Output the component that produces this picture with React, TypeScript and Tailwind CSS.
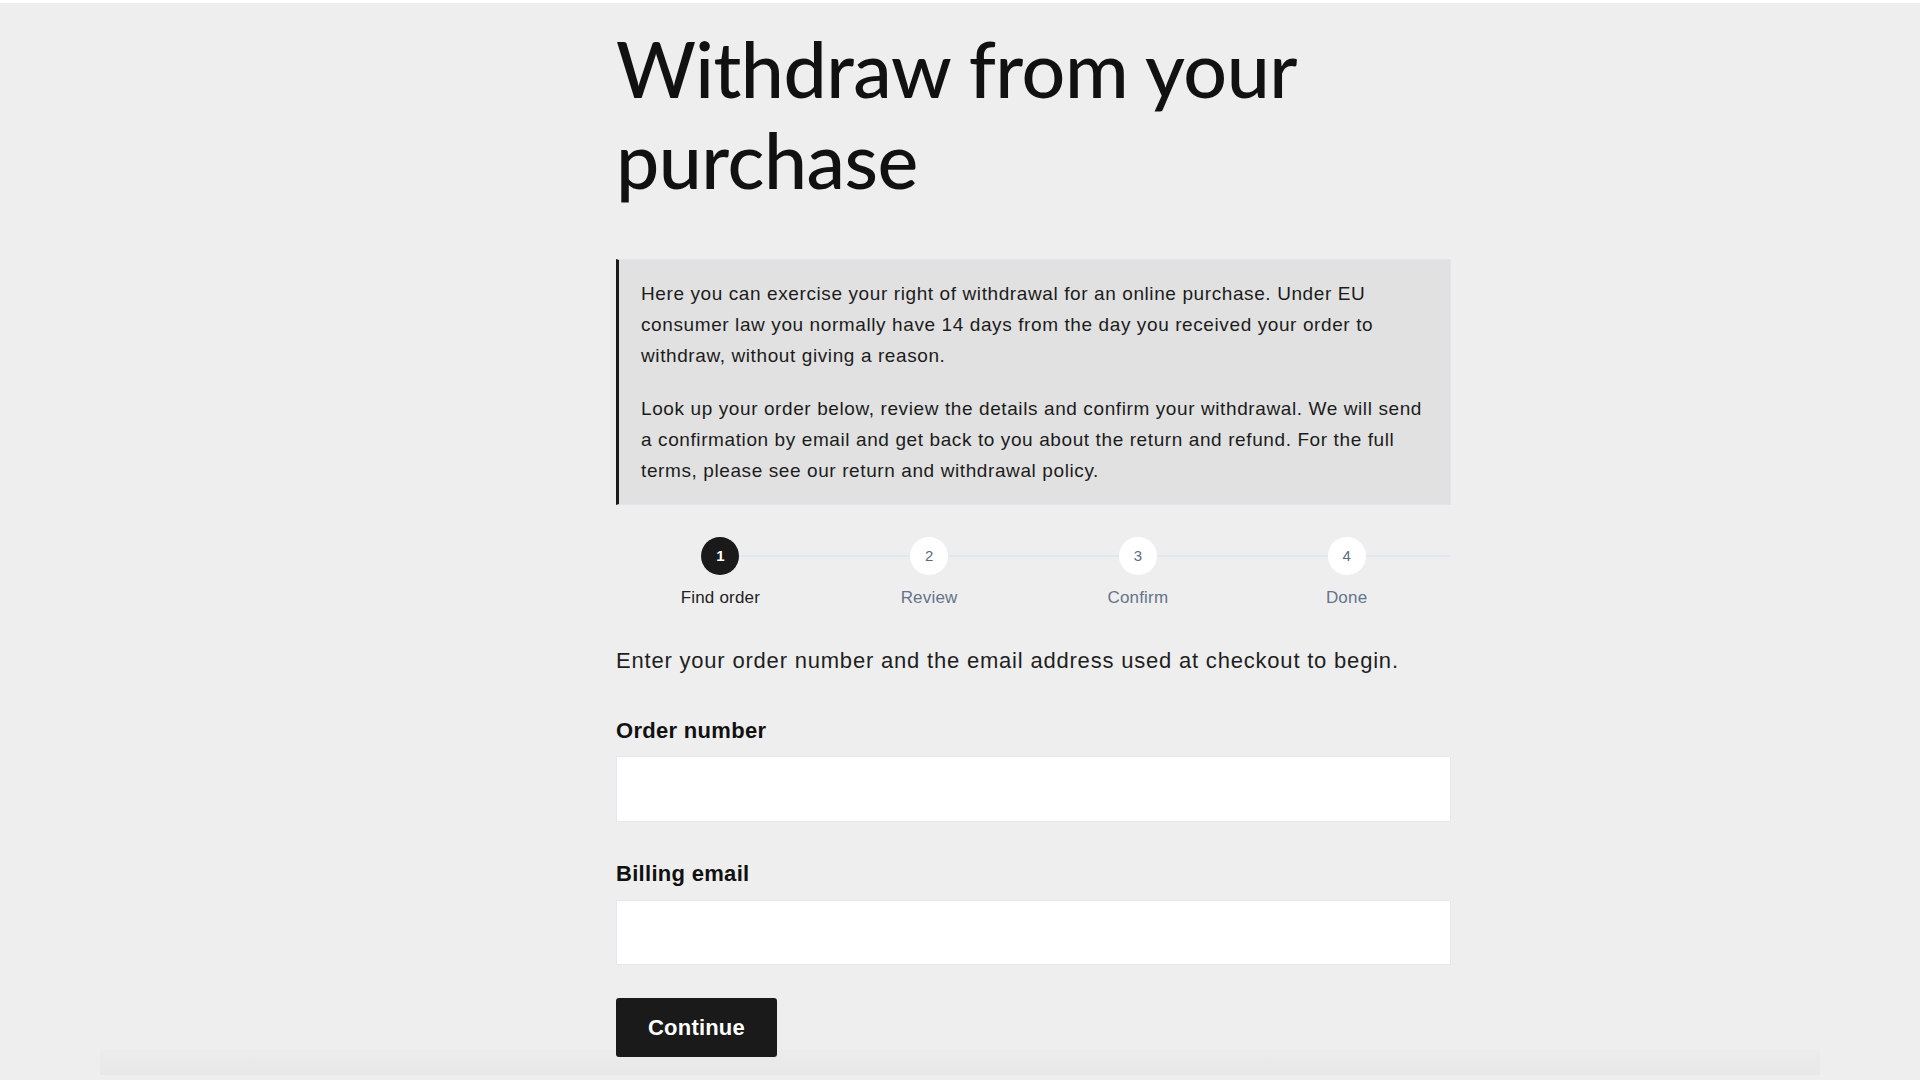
import { useState } from "react";

const steps = ["Find order", "Review", "Confirm", "Done"];

const Stepper = ({ current }: { current: number }) => {
  return (
    <div className="relative grid grid-cols-4 mt-[32px]">
      {/* track runs from the first step to the right edge */}
      <div className="absolute left-[12.5%] right-0 top-[18px] h-[2px] bg-[#e1e7ef]" />
      {steps.map((label, index) => {
        const active = index + 1 === current;
        return (
          <div key={label} className="relative flex flex-col items-center">
            <div
              className={`w-[38px] h-[38px] rounded-full flex items-center justify-center text-[15px] ${
                active
                  ? "bg-[#1a1a1a] text-white font-bold"
                  : "bg-white text-[#5b6b84]"
              }`}
            >
              {index + 1}
            </div>
            <span
              className={`mt-[13px] text-[17px] leading-[20px] tracking-[0.2px] ${
                active ? "text-[#222]" : "text-[#64748b]"
              }`}
            >
              {label}
            </span>
          </div>
        );
      })}
    </div>
  );
};

const App = () => {
  const [orderNumber, setOrderNumber] = useState("");
  const [email, setEmail] = useState("");

  return (
    <div className="relative min-h-screen bg-[#eeeeee] border-t-[3px] border-t-white font-['Liberation_Sans',Arial,sans-serif] text-[#1f1f1f]">
      {/* faint footer strip behind the form */}
      <div className="absolute left-[100px] right-[100px] top-[1046px] h-[26px] bg-gradient-to-b from-[#ececec] to-[#e8e8e8]" />
      <div className="relative mx-auto w-[1720px]">
        <div className="ml-[516px] w-[835px]">
          <h1 className="pt-[20px] font-['Lato',sans-serif] font-medium text-[77px] leading-[91px] tracking-[-0.5px] text-[#111]">
            Withdraw from your purchase
          </h1>

          <div className="mt-[54px] border border-[#dfe5ee] border-l-[3px] border-l-[#1a1a1a] bg-[#e1e1e1] pl-[22px] pr-[24px] py-[18px] text-[19px] leading-[31px] tracking-[0.6px] text-[#1c1c1c]">
            <p>
              Here you can exercise your right of withdrawal for an online
              purchase. Under EU consumer law you normally have 14 days from
              the day you received your order to withdraw, without giving a
              reason.
            </p>
            <p className="mt-[22px]">
              Look up your order below, review the details and confirm your
              withdrawal. We will send a confirmation by email and get back to
              you about the return and refund. For the full terms, please see
              our return and withdrawal policy.
            </p>
          </div>

          <Stepper current={1} />

          <p className="mt-[39px] text-[22px] leading-[28px] tracking-[0.8px] text-[#1f1f1f]">
            Enter your order number and the email address used at checkout to
            begin.
          </p>

          <label className="block mt-[43px] text-[22px] leading-[26px] tracking-[0.3px] font-bold text-[#111]">
            Order number
          </label>
          <input
            type="text"
            value={orderNumber}
            onChange={(e) => setOrderNumber(e.target.value)}
            className="block mt-[12px] w-full h-[66px] bg-white border border-[#e2e8f0] px-4 text-[18px] outline-none"
          />

          <label className="block mt-[39px] text-[22px] leading-[26px] tracking-[0.3px] font-bold text-[#111]">
            Billing email
          </label>
          <input
            type="email"
            value={email}
            onChange={(e) => setEmail(e.target.value)}
            className="block mt-[13px] w-full h-[65px] bg-white border border-[#e2e8f0] px-4 text-[18px] outline-none"
          />

          <button className="mt-[33px] w-[161px] h-[59px] rounded-[3px] bg-[#1a1a1a] text-white text-[22px] tracking-[0.2px] font-bold">
            Continue
          </button>
        </div>
      </div>
    </div>
  );
};

export default App;
